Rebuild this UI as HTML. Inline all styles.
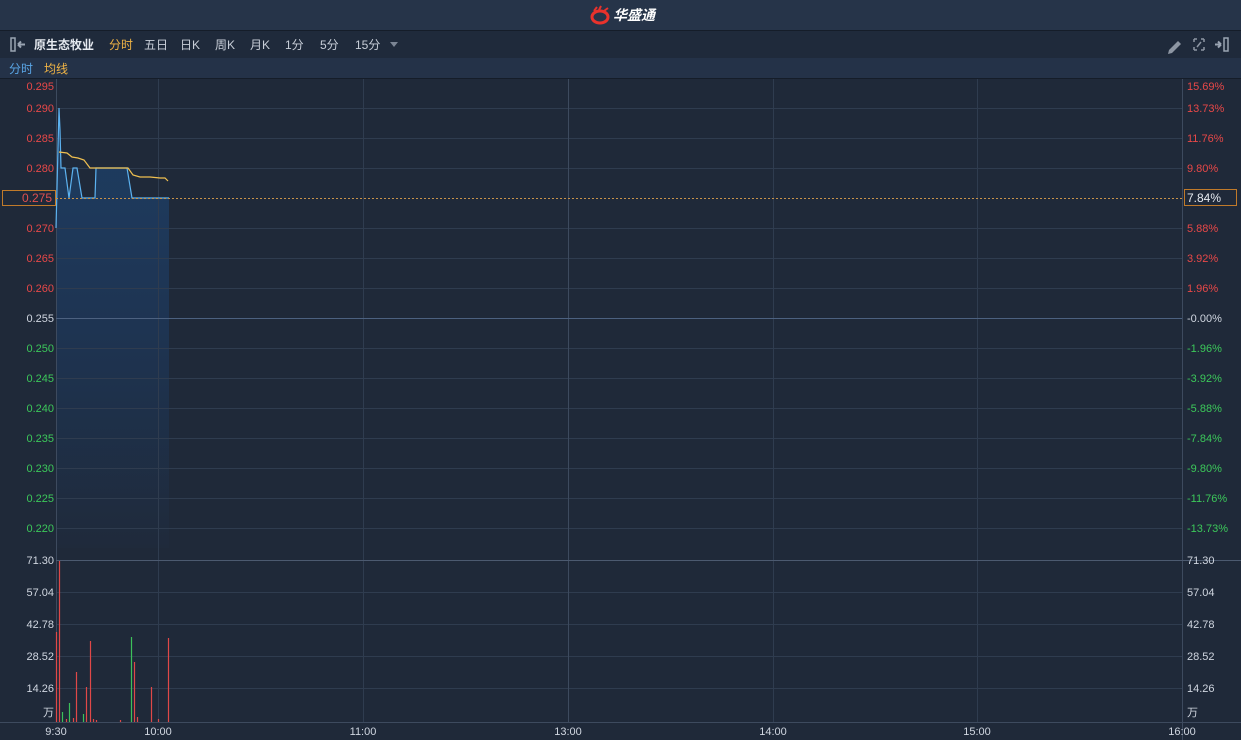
<!DOCTYPE html>
<html><head><meta charset="utf-8"><style>
html,body{margin:0;padding:0;background:#1e2837;width:1241px;height:740px;overflow:hidden}
svg{display:block}
text{font-family:"Liberation Sans","Noto Sans CJK SC",sans-serif;font-size:11px}
</style></head><body>
<svg width="1241" height="740" xmlns="http://www.w3.org/2000/svg">
<defs><linearGradient id="g" x1="0" y1="0" x2="0" y2="1">
<stop offset="0" stop-color="#1d3d62"/><stop offset="0.5" stop-color="#1e3452"/><stop offset="1" stop-color="#1f2a3b"/>
</linearGradient></defs>
<rect x="0" y="0" width="1241" height="740" fill="#1f2939"/>
<!-- header -->
<rect x="0" y="0" width="1241" height="30" fill="#263449"/>
<rect x="0" y="30" width="1241" height="1" fill="#151d29"/>
<g transform="translate(591,9)">
<ellipse cx="9" cy="8" rx="8" ry="6" fill="none" stroke="#e8322c" stroke-width="3"/>
<path d="M3 2 L6 -2 M8 1 L10 -3 M13 2 L17 -1" stroke="#e8322c" stroke-width="2"/>
</g>
<text x="613" y="20" fill="#ffffff" style="font-size:14px;font-weight:bold;font-style:italic">华盛通</text>
<!-- toolbar -->
<rect x="0" y="31" width="1241" height="27" fill="#1f2a3b"/>
<rect x="11" y="38" width="4" height="13" fill="none" stroke="#9aa4b2" stroke-width="1.5"/>
<path d="M18 44.5 L25 44.5 M18 44.5 L21 41.5 M18 44.5 L21 47.5" stroke="#9aa4b2" stroke-width="2"/>
<text x="34" y="49" fill="#e6eaf0" style="font-size:12px;font-weight:bold">原生态牧业</text>
<text x="109" y="49" fill="#f0b445" style="font-size:12px">分时</text>
<text x="144" y="49" fill="#c8ced8" style="font-size:12px">五日</text>
<text x="180" y="49" fill="#c8ced8" style="font-size:12px">日K</text>
<text x="215" y="49" fill="#c8ced8" style="font-size:12px">周K</text>
<text x="250" y="49" fill="#c8ced8" style="font-size:12px">月K</text>
<text x="285" y="49" fill="#c8ced8" style="font-size:12px">1分</text>
<text x="320" y="49" fill="#c8ced8" style="font-size:12px">5分</text>
<text x="355" y="49" fill="#c8ced8" style="font-size:12px">15分</text>
<path d="M390 42 L398 42 L394 47 Z" fill="#7b8594"/>
<path d="M1169 50 L1178 41 L1181 44 L1172 53 L1168 54 Z" fill="#8d96a3"/>
<path d="M1194 39 h3 M1194 39 v3 M1204 39 h-3 M1204 39 v3 M1194 50 h3 M1194 50 v-3 M1204 50 h-3 M1204 50 v-3 M1197 47 L1201 42" stroke="#8d96a3" stroke-width="1.5" fill="none"/>
<path d="M1215 44.5 L1221 44.5 M1221 44.5 L1218 41.5 M1221 44.5 L1218 47.5" stroke="#9aa4b2" stroke-width="2"/>
<rect x="1224" y="38" width="4" height="13" fill="none" stroke="#9aa4b2" stroke-width="1.5"/>
<!-- subbar -->
<rect x="0" y="58" width="1241" height="20" fill="#243248"/>
<rect x="0" y="78" width="1241" height="1" fill="#151d29"/>
<text x="9" y="73" fill="#5aa6e6" style="font-size:12px">分时</text>
<text x="44" y="73" fill="#f0b445" style="font-size:12px">均线</text>
<!-- fill -->
<path d="M56 228 L59 108 L60 130 L61 168 L65 168 L69 198 L73 168 L77 168 L82 198 L95 198 L96 168 L127 168 L132 198 L169 198 L169 548 L56 548 Z" fill="url(#g)"/>
<!-- grid -->
<g stroke="#2f3c4f" stroke-width="1">
<line x1="56" y1="108.5" x2="1182" y2="108.5"/>
<line x1="56" y1="138.5" x2="1182" y2="138.5"/>
<line x1="56" y1="168.5" x2="1182" y2="168.5"/>
<line x1="56" y1="228.5" x2="1182" y2="228.5"/>
<line x1="56" y1="258.5" x2="1182" y2="258.5"/>
<line x1="56" y1="288.5" x2="1182" y2="288.5"/>
<line x1="56" y1="348.5" x2="1182" y2="348.5"/>
<line x1="56" y1="378.5" x2="1182" y2="378.5"/>
<line x1="56" y1="408.5" x2="1182" y2="408.5"/>
<line x1="56" y1="438.5" x2="1182" y2="438.5"/>
<line x1="56" y1="468.5" x2="1182" y2="468.5"/>
<line x1="56" y1="498.5" x2="1182" y2="498.5"/>
<line x1="56" y1="528.5" x2="1182" y2="528.5"/>
<line x1="56" y1="592.5" x2="1182" y2="592.5"/>
<line x1="56" y1="624.5" x2="1182" y2="624.5"/>
<line x1="56" y1="656.5" x2="1182" y2="656.5"/>
<line x1="56" y1="688.5" x2="1182" y2="688.5"/>
<line x1="158.5" y1="79" x2="158.5" y2="722"/>
<line x1="363.5" y1="79" x2="363.5" y2="722"/>
<line x1="773.5" y1="79" x2="773.5" y2="722"/>
<line x1="977.5" y1="79" x2="977.5" y2="722"/>
</g>
<line x1="568.5" y1="79" x2="568.5" y2="722" stroke="#3d4a5e"/>
<line x1="56.5" y1="79" x2="56.5" y2="722" stroke="#3d4a5e"/>
<line x1="1182.5" y1="79" x2="1182.5" y2="740" stroke="#3d4a5e"/>
<line x1="56" y1="318.5" x2="1182" y2="318.5" stroke="#4c6180"/>
<line x1="56" y1="560.5" x2="1241" y2="560.5" stroke="#4c5a70"/>
<line x1="0" y1="722.5" x2="1241" y2="722.5" stroke="#3d4a5e"/>
<path d="M56 228 L59 108 L60 130 L61 168 L65 168 L69 198 L73 168 L77 168 L82 198 L95 198 L96 168 L127 168 L132 198 L169 198" fill="none" stroke="#5cb2f0" stroke-width="1.2"/>
<path d="M59 152 L67 153 L72 157 L78 158 L84 160 L90 168 L96 168 L128 168 L133 175 L140 177 L150 177 L160 178 L165 178 L168 181" fill="none" stroke="#f0c050" stroke-width="1.2"/>
<!-- dashed 0.275 line -->
<line x1="56" y1="198.5" x2="1182" y2="198.5" stroke="#c8924a" stroke-dasharray="2,2"/>
<rect x="2.5" y="190.5" width="53" height="15" fill="#1f2939" stroke="#c07a2a"/>
<text x="52" y="202" fill="#e05050" text-anchor="end" style="font-size:12px">0.275</text>
<rect x="1184.5" y="189.5" width="52" height="16" fill="#1f2939" stroke="#c07a2a"/>
<text x="1187" y="202" fill="#e6eaf0" style="font-size:12px">7.84%</text>
<!-- left price labels -->
<g text-anchor="end" fill="#e84848">
<text x="54" y="90">0.295</text><text x="54" y="112">0.290</text><text x="54" y="142">0.285</text>
<text x="54" y="172">0.280</text><text x="54" y="232">0.270</text><text x="54" y="262">0.265</text><text x="54" y="292">0.260</text>
</g>
<text x="54" y="322" text-anchor="end" fill="#d0d6e0">0.255</text>
<g text-anchor="end" fill="#3cc85a">
<text x="54" y="352">0.250</text><text x="54" y="382">0.245</text><text x="54" y="412">0.240</text><text x="54" y="442">0.235</text>
<text x="54" y="472">0.230</text><text x="54" y="502">0.225</text><text x="54" y="532">0.220</text>
</g>
<g fill="#e84848">
<text x="1187" y="90">15.69%</text><text x="1187" y="112">13.73%</text><text x="1187" y="142">11.76%</text>
<text x="1187" y="172">9.80%</text><text x="1187" y="232">5.88%</text><text x="1187" y="262">3.92%</text><text x="1187" y="292">1.96%</text>
</g>
<text x="1187" y="322" fill="#d0d6e0">-0.00%</text>
<g fill="#3cc85a">
<text x="1187" y="352">-1.96%</text><text x="1187" y="382">-3.92%</text><text x="1187" y="412">-5.88%</text><text x="1187" y="442">-7.84%</text>
<text x="1187" y="472">-9.80%</text><text x="1187" y="502">-11.76%</text><text x="1187" y="532">-13.73%</text>
</g>
<!-- volume labels -->
<g fill="#d0d6e0">
<text x="54" y="564" text-anchor="end">71.30</text><text x="54" y="596" text-anchor="end">57.04</text>
<text x="54" y="628" text-anchor="end">42.78</text><text x="54" y="660" text-anchor="end">28.52</text>
<text x="54" y="692" text-anchor="end">14.26</text><text x="54" y="716" text-anchor="end">万</text>
<text x="1187" y="564">71.30</text><text x="1187" y="596">57.04</text><text x="1187" y="628">42.78</text>
<text x="1187" y="660">28.52</text><text x="1187" y="692">14.26</text><text x="1187" y="716">万</text>
</g>
<!-- volume bars -->
<g stroke-width="1.2">
<line x1="56.5" y1="632" x2="56.5" y2="722" stroke="#e04848"/>
<line x1="59.5" y1="561" x2="59.5" y2="722" stroke="#e04848"/>
<line x1="62.5" y1="712" x2="62.5" y2="722" stroke="#3cc05a"/>
<line x1="66.5" y1="719" x2="66.5" y2="722" stroke="#e04848"/>
<line x1="69.5" y1="703" x2="69.5" y2="722" stroke="#3cc05a"/>
<line x1="73.5" y1="718" x2="73.5" y2="722" stroke="#e04848"/>
<line x1="76.5" y1="672" x2="76.5" y2="722" stroke="#e04848"/>
<line x1="83.5" y1="714" x2="83.5" y2="722" stroke="#3cc05a"/>
<line x1="86.5" y1="687" x2="86.5" y2="722" stroke="#e04848"/>
<line x1="90.5" y1="641" x2="90.5" y2="722" stroke="#e04848"/>
<line x1="93.5" y1="719" x2="93.5" y2="722" stroke="#e04848"/>
<line x1="96.5" y1="720" x2="96.5" y2="722" stroke="#e04848"/>
<line x1="120.5" y1="720" x2="120.5" y2="722" stroke="#e04848"/>
<line x1="131.5" y1="637" x2="131.5" y2="722" stroke="#3cc05a"/>
<line x1="134.5" y1="662" x2="134.5" y2="722" stroke="#e04848"/>
<line x1="137.5" y1="717" x2="137.5" y2="722" stroke="#e04848"/>
<line x1="151.5" y1="687" x2="151.5" y2="722" stroke="#e04848"/>
<line x1="158.5" y1="719" x2="158.5" y2="722" stroke="#e04848"/>
<line x1="168.5" y1="638" x2="168.5" y2="722" stroke="#e04848"/>
</g>
<!-- time labels -->
<g fill="#d0d6e0" text-anchor="middle">
<text x="56" y="735">9:30</text><text x="158" y="735">10:00</text><text x="363" y="735">11:00</text>
<text x="568" y="735">13:00</text><text x="773" y="735">14:00</text><text x="977" y="735">15:00</text>
<text x="1182" y="735">16:00</text>
</g>
</svg>
</body></html>
